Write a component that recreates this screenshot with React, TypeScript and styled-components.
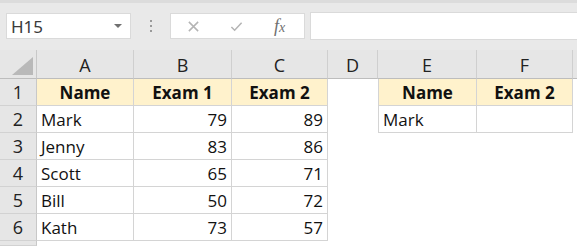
import React from "react"
import styled, { createGlobalStyle } from "styled-components"

const GlobalStyle = createGlobalStyle`
  html, body {
    margin: 0;
    padding: 0;
    background: #ffffff;
  }
  body {
    font-family: "Open Sans", "Noto Sans", sans-serif;
    color: #111;
  }
`

const columns = ["A", "B", "C", "D", "E", "F"]

const rows = [
  ["Mark", 79, 89],
  ["Jenny", 83, 86],
  ["Scott", 65, 71],
  ["Bill", 50, 72],
  ["Kath", 73, 57],
]

const App = () => {
  return (
    <Page>
      <GlobalStyle />
      <Toolbar>
        <NameBox>
          <NameText>H15</NameText>
          <DropArrow />
        </NameBox>
        <Grip>
          <Dot />
          <Dot />
          <Dot />
        </Grip>
        <FormulaButtons>
          <ToolIcon viewBox="0 0 14 14">
            <path d="M2 2 L12 12 M12 2 L2 12" stroke="#b4b4b4" strokeWidth="1.6" fill="none" />
          </ToolIcon>
          <ToolIcon viewBox="0 0 14 14">
            <path d="M1.5 7.5 L5 11 L12.5 3" stroke="#b4b4b4" strokeWidth="1.6" fill="none" />
          </ToolIcon>
          <Fx>
            f<sub>x</sub>
          </Fx>
        </FormulaButtons>
        <FormulaInput />
      </Toolbar>

      <Sheet>
        <Corner>
          <CornerTriangle />
        </Corner>
        {columns.map((c) => (
          <ColHeader key={c}>{c}</ColHeader>
        ))}
        <ColFiller />

        <RowHeader>1</RowHeader>
        <Cell $head>Name</Cell>
        <Cell $head>Exam 1</Cell>
        <Cell $head>Exam 2</Cell>
        <Blank />
        <Cell $head $leftLine>
          Name
        </Cell>
        <Cell $head>Exam 2</Cell>
        <Blank />

        <RowHeader>2</RowHeader>
        <Cell>Mark</Cell>
        <Cell $num>79</Cell>
        <Cell $num>89</Cell>
        <Blank />
        <Cell $leftLine>Mark</Cell>
        <Cell />
        <Blank />

        {rows.slice(1).map((r, i) => (
          <React.Fragment key={r[0]}>
            <RowHeader>{i + 3}</RowHeader>
            <Cell>{r[0]}</Cell>
            <Cell $num>{r[1]}</Cell>
            <Cell $num>{r[2]}</Cell>
            <Blank />
            <Blank />
            <Blank />
            <Blank />
          </React.Fragment>
        ))}

        <RowHeader />
        <Blank />
      </Sheet>
    </Page>
  )
}

export default App

const Page = styled.div`
  width: 577px;
  height: 246px;
  overflow: hidden;
  background: #ffffff;
`

const Toolbar = styled.div`
  height: 50px;
  box-sizing: border-box;
  background: #e9e9e9;
  border-top: 3px solid #dcdcdc;
  display: flex;
  align-items: center;
  padding: 0 0 1px 6px;
`

const NameBox = styled.div`
  width: 125px;
  height: 26px;
  box-sizing: border-box;
  background: #ffffff;
  border: 1px solid #dadada;
  display: flex;
  align-items: center;
  justify-content: space-between;
  padding: 0 8px 0 4px;
`

const NameText = styled.span`
  font-family: "Noto Sans", sans-serif;
  font-size: 17px;
  color: #3a3a3a;
`

const DropArrow = styled.span`
  width: 0;
  height: 0;
  border-left: 4px solid transparent;
  border-right: 4px solid transparent;
  border-top: 4px solid #707070;
`

const Grip = styled.div`
  width: 39px;
  display: flex;
  flex-direction: column;
  align-items: center;
  gap: 3px;
`

const Dot = styled.span`
  width: 2px;
  height: 2px;
  background: #9a9a9a;
`

const FormulaButtons = styled.div`
  width: 135px;
  height: 26px;
  box-sizing: border-box;
  background: #ffffff;
  border: 1px solid #dadada;
  display: flex;
  align-items: center;
  padding-left: 16px;
  gap: 30px;
`

const ToolIcon = styled.svg`
  width: 13px;
  height: 13px;
`

const Fx = styled.span`
  font-family: "Liberation Serif", serif;
  font-style: italic;
  font-size: 18px;
  color: #6f6f6f;
  margin-left: 1px;
  sub {
    font-size: 14px;
    vertical-align: 0;
  }
`

const FormulaInput = styled.div`
  flex: 1;
  height: 26px;
  margin-left: 5px;
  background: #ffffff;
  border: 1px solid #dadada;
  border-right: none;
`

const Sheet = styled.div`
  display: grid;
  grid-template-columns: 37px 97px 98px 96px 50px 99px 96px 1fr;
  grid-template-rows: 29px repeat(6, 27px) 1fr;
  height: 196px;
  font-size: 17px;
`

const Corner = styled.div`
  background: #e6e6e6;
  border-right: 1px solid #c8c8c8;
  border-bottom: 1px solid #bdbdbd;
  position: relative;
`

const CornerTriangle = styled.span`
  position: absolute;
  right: 3px;
  bottom: 3px;
  width: 0;
  height: 0;
  border-left: 21px solid transparent;
  border-bottom: 18px solid #b9b9b9;
`

const ColHeader = styled.div`
  background: #e6e6e6;
  border-right: 1px solid #cfcfcf;
  border-bottom: 1px solid #bdbdbd;
  display: flex;
  align-items: center;
  justify-content: center;
  padding-top: 2px;
  font-size: 18px;
  color: #222;
`

const ColFiller = styled.div`
  background: #e6e6e6;
  border-bottom: 1px solid #bdbdbd;
`

const RowHeader = styled.div`
  background: #e6e6e6;
  border-right: 1px solid #c8c8c8;
  border-bottom: 1px solid #d2d2d2;
  display: flex;
  align-items: center;
  justify-content: center;
  font-size: 18px;
  color: #222;
`

const Cell = styled.div<{ $head?: boolean; $num?: boolean; $leftLine?: boolean }>`
  background: ${(p) => (p.$head ? "#fff2cc" : "#ffffff")};
  font-weight: ${(p) => (p.$head ? 700 : 400)};
  border-right: 1px solid #d4d4d4;
  border-bottom: 1px solid #d4d4d4;
  border-left: ${(p) => (p.$leftLine ? "1px solid #d4d4d4" : "none")};
  display: flex;
  align-items: center;
  justify-content: ${(p) => (p.$head ? "center" : p.$num ? "flex-end" : "flex-start")};
  padding: 0 4px;
  white-space: nowrap;
  color: #111;
`

const Blank = styled.div`
  background: #ffffff;
`
